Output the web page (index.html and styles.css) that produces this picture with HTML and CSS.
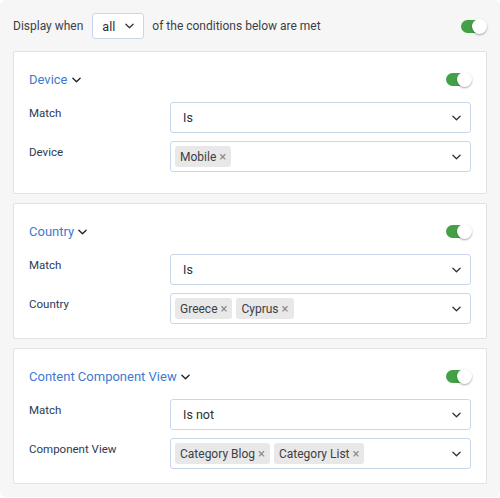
FILE: index.html
```html
<!DOCTYPE html>
<html>
<head>
<meta charset="utf-8">
<link rel="stylesheet" href="styles.css">
</head>
<body>
<div class="panel">
  <div class="top-row">
    <span class="top-text">Display when</span>
    <div class="select select-small">
      <span class="select-value">all</span>
      <svg class="chev" viewBox="0 0 10 6" width="9" height="6"><path d="M1 1l4 4 4-4" fill="none" stroke="#333" stroke-width="1.4" stroke-linecap="round" stroke-linejoin="round"/></svg>
    </div>
    <span class="top-text">of the conditions below are met</span>
    <span class="toggle"><span class="knob"></span></span>
  </div>

  <div class="card card-first">
    <div class="card-head">
      <span class="card-title">Device</span>
      <svg class="title-chev" viewBox="0 0 10 6" width="9" height="6"><path d="M1 1l4 4 4-4" fill="none" stroke="#222" stroke-width="1.5" stroke-linecap="round" stroke-linejoin="round"/></svg>
      <span class="toggle"><span class="knob"></span></span>
    </div>
    <div class="field">
      <span class="label">Match</span>
      <div class="select"><span class="select-value">Is</span><svg class="chev" viewBox="0 0 10 6" width="9" height="6"><path d="M1 1l4 4 4-4" fill="none" stroke="#333" stroke-width="1.4" stroke-linecap="round" stroke-linejoin="round"/></svg></div>
    </div>
    <div class="field">
      <span class="label">Device</span>
      <div class="select multi"><span class="tags"><span class="tag">Mobile <span class="x">×</span></span></span><svg class="chev" viewBox="0 0 10 6" width="9" height="6"><path d="M1 1l4 4 4-4" fill="none" stroke="#333" stroke-width="1.4" stroke-linecap="round" stroke-linejoin="round"/></svg></div>
    </div>
  </div>

  <div class="card">
    <div class="card-head">
      <span class="card-title">Country</span>
      <svg class="title-chev" viewBox="0 0 10 6" width="9" height="6"><path d="M1 1l4 4 4-4" fill="none" stroke="#222" stroke-width="1.5" stroke-linecap="round" stroke-linejoin="round"/></svg>
      <span class="toggle"><span class="knob"></span></span>
    </div>
    <div class="field">
      <span class="label">Match</span>
      <div class="select"><span class="select-value">Is</span><svg class="chev" viewBox="0 0 10 6" width="9" height="6"><path d="M1 1l4 4 4-4" fill="none" stroke="#333" stroke-width="1.4" stroke-linecap="round" stroke-linejoin="round"/></svg></div>
    </div>
    <div class="field">
      <span class="label">Country</span>
      <div class="select multi"><span class="tags"><span class="tag">Greece <span class="x">×</span></span><span class="tag">Cyprus <span class="x">×</span></span></span><svg class="chev" viewBox="0 0 10 6" width="9" height="6"><path d="M1 1l4 4 4-4" fill="none" stroke="#333" stroke-width="1.4" stroke-linecap="round" stroke-linejoin="round"/></svg></div>
    </div>
  </div>

  <div class="card">
    <div class="card-head">
      <span class="card-title">Content Component View</span>
      <svg class="title-chev" viewBox="0 0 10 6" width="9" height="6"><path d="M1 1l4 4 4-4" fill="none" stroke="#222" stroke-width="1.5" stroke-linecap="round" stroke-linejoin="round"/></svg>
      <span class="toggle"><span class="knob"></span></span>
    </div>
    <div class="field">
      <span class="label">Match</span>
      <div class="select"><span class="select-value">Is not</span><svg class="chev" viewBox="0 0 10 6" width="9" height="6"><path d="M1 1l4 4 4-4" fill="none" stroke="#333" stroke-width="1.4" stroke-linecap="round" stroke-linejoin="round"/></svg></div>
    </div>
    <div class="field">
      <span class="label">Component View</span>
      <div class="select multi"><span class="tags"><span class="tag">Category Blog <span class="x">×</span></span><span class="tag">Category List <span class="x">×</span></span></span><svg class="chev" viewBox="0 0 10 6" width="9" height="6"><path d="M1 1l4 4 4-4" fill="none" stroke="#333" stroke-width="1.4" stroke-linecap="round" stroke-linejoin="round"/></svg></div>
    </div>
  </div>
</div>
</body>
</html>
```

FILE: styles.css
```css
html, body {
  margin: 0;
  padding: 0;
  background: #ffffff;
}
body {
  font-family: Roboto, "Liberation Sans", Arial, sans-serif;
  color: #333;
}
.panel {
  box-sizing: border-box;
  width: 500px;
  height: 497px;
  background: #f6f6f6;
  border-radius: 6px;
  padding: 13px 13px 0;
  display: flex;
  flex-direction: column;
  gap: 9px;
}
.top-row {
  display: flex;
  align-items: center;
  height: 26px;
  margin-bottom: 3px;
}
.top-text {
  font-size: 12px;
  color: #3a3f47;
}
.top-row .toggle {
  margin-left: auto;
  margin-right: 1px;
}
.select {
  box-sizing: border-box;
  display: flex;
  align-items: center;
  background: #fff;
  border: 1px solid #c9d7ec;
  border-radius: 3px;
  height: 31px;
  padding: 0 9px 0 12px;
}
.select-small {
  width: 52px;
  height: 26px;
  margin: 0 8px 0 9px;
  padding: 0 9px 0 9px;
}
.select-value {
  font-size: 12.5px;
  color: #2a2f36;
  flex: 1;
}
.chev {
  flex: none;
}
.select.multi {
  padding-left: 4px;
}
.tags {
  flex: 1;
  display: flex;
  gap: 4px;
}
.tag {
  display: inline-flex;
  align-items: center;
  height: 21px;
  padding: 0 5px;
  background: #e8e8e8;
  border-radius: 3px;
  font-size: 12px;
  color: #3c4047;
}
.tag .x {
  color: #8a8a8a;
  font-size: 13px;
  margin-left: 3px;
}
.card {
  background: #fff;
  border: 1px solid #e2e2e2;
  border-radius: 2px;
  padding: 17px 15px 14px;
  display: flex;
  flex-direction: column;
  gap: 8px;
}
.card-first {
  padding-bottom: 21px;
}
.card-head {
  display: flex;
  align-items: center;
  height: 20px;
  margin-bottom: 5px;
}
.card-title {
  font-size: 13px;
  color: #3d7bd0;
}
.title-chev {
  margin-left: 4px;
  margin-top: 2px;
}
.card-head .toggle {
  margin-left: auto;
}
.field {
  display: grid;
  grid-template-columns: 141px 301px;
  align-items: start;
}
.label {
  font-size: 11.5px;
  color: #2b3b55;
  line-height: 18px;
  padding-top: 2px;
}
.toggle {
  position: relative;
  width: 25px;
  height: 13px;
  border-radius: 7px;
  background: #43a047;
  display: inline-block;
  flex: none;
}
.knob {
  position: absolute;
  right: -1px;
  top: -1px;
  width: 15px;
  height: 15px;
  border-radius: 50%;
  background: #fff;
  box-shadow: 0 1px 2px rgba(0,0,0,0.35);
}
```
